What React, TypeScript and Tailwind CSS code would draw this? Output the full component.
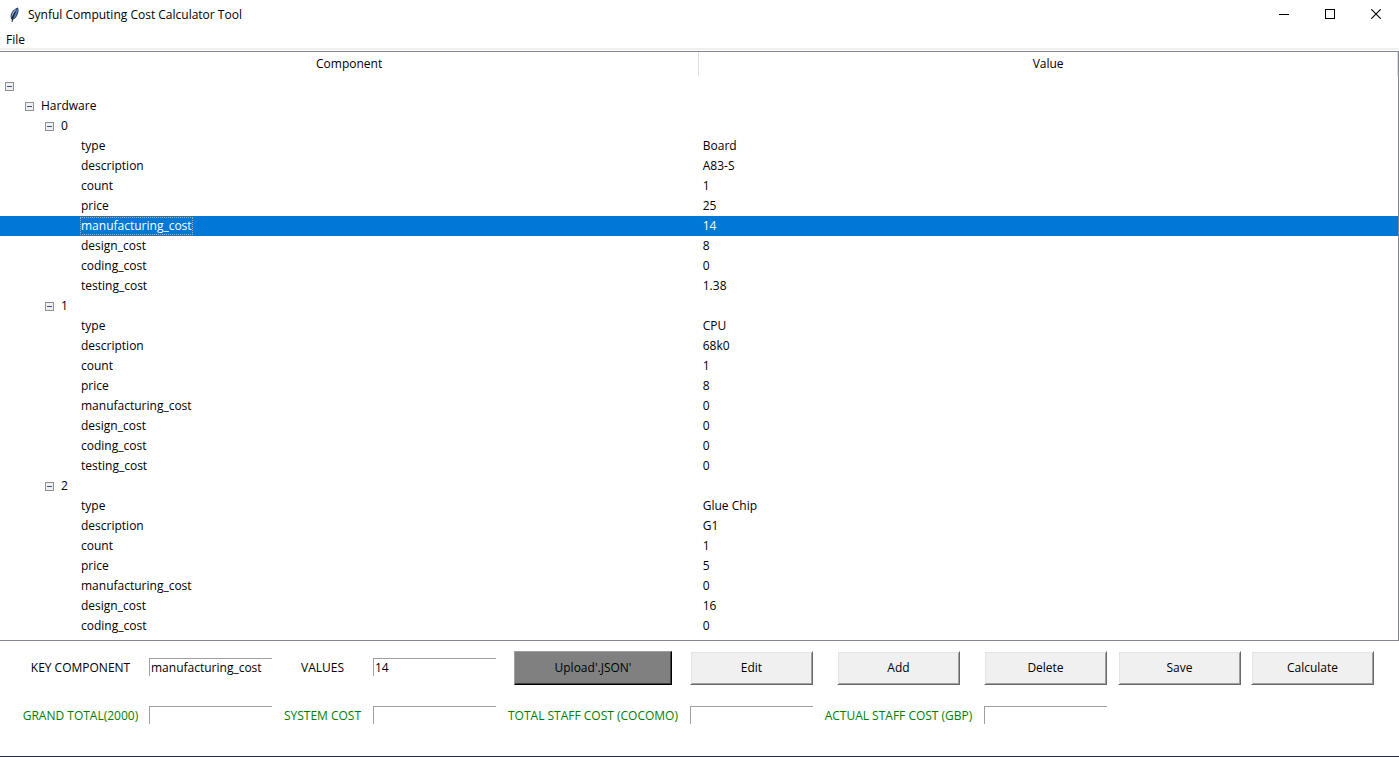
import { useState } from "react";
import type { ReactNode } from "react";

type Row = {
  id: string;
  label: string;
  value?: string;
  level: number;
  parents: string[];
  branch?: boolean;
};

const fields = [
  "type",
  "description",
  "count",
  "price",
  "manufacturing_cost",
  "design_cost",
  "coding_cost",
  "testing_cost",
];

const components = [
  ["Board", "A83-S", "1", "25", "14", "8", "0", "1.38"],
  ["CPU", "68k0", "1", "8", "0", "0", "0", "0"],
  ["Glue Chip", "G1", "1", "5", "0", "16", "0"],
];

const rows: Row[] = [
  { id: "root", label: "", level: 0, parents: [], branch: true },
  { id: "hw", label: "Hardware", level: 1, parents: ["root"], branch: true },
  ...components.flatMap((values, i): Row[] => [
    { id: `hw${i}`, label: String(i), level: 2, parents: ["root", "hw"], branch: true },
    ...values.map((value, j) => ({
      id: `hw${i}-${j}`,
      label: fields[j],
      value,
      level: 3,
      parents: ["root", "hw", `hw${i}`],
    })),
  ]),
];

const indents = ["pl-[5px]", "pl-[25px]", "pl-[45px]", "pl-[81px]"];

function Feather() {
  return (
    <svg width="12" height="16" viewBox="0 0 12 16" aria-hidden="true">
      <path d="M9.8 0.4C11 1.6 10.8 4.6 9.6 7.6C8.6 10.2 7 12 4.8 12.8L3 12C2 9.2 2.8 6.2 4.8 3.8C6.4 2 8.4 0.8 9.8 0.4Z" fill="#2c3a56" />
      <path d="M9.5 1.4C10.2 3.6 9.3 6.8 7.6 9.4C6.6 10.8 5.6 11.6 4.6 11.8C5 9 7.2 5.2 9.5 1.4Z" fill="#5078b4" />
      <path d="M8.8 1.8C5.6 3.4 3.3 6.6 3.6 10.4C4.8 7.6 6.6 4.6 8.8 1.8Z" fill="#9dbbe2" />
      <path d="M7.4 5C5.8 7.6 4.6 10.6 4 15" fill="none" stroke="#141a26" strokeWidth="1" />
    </svg>
  );
}

function Expander({ open, label, onClick }: { open: boolean; label: string; onClick: () => void }) {
  return (
    <button
      type="button"
      aria-label={`Toggle ${label || "root"}`}
      aria-expanded={open}
      onClick={onClick}
      className="mr-[7px] block h-[9px] w-[9px] shrink-0"
    >
      <svg width="9" height="9" viewBox="0 0 9 9" shapeRendering="crispEdges">
        <rect x="0.5" y="0.5" width="8" height="8" fill="#f0f0f0" stroke="#919191" />
        <path d="M2 4.5H7" stroke="#404f86" />
        {!open && <path d="M4.5 2V7" stroke="#404f86" />}
      </svg>
    </button>
  );
}

function WindowButton({ label, children }: { label: string; children: ReactNode }) {
  return (
    <button type="button" aria-label={label} className="flex h-7 w-[46px] items-center justify-center hover:bg-gray-200">
      <svg width="10" height="10" viewBox="0 0 10 10" fill="none" stroke="#000">
        {children}
      </svg>
    </button>
  );
}

const inputClass =
  "mb-0.5 block h-[18px] w-full min-w-0 border-t border-l border-[#a0a0a0] bg-white pl-px text-black outline-none";
const buttonClass =
  "block h-[34px] w-full border border-t-white border-l-white border-r-[#696969] border-b-[#696969] bg-[#f0f0f0] shadow-[inset_1px_1px_#e3e3e3,inset_-1px_-1px_#a0a0a0]";

export default function App() {
  const [closed, setClosed] = useState<string[]>([]);
  const [selected, setSelected] = useState("hw0-4");
  const [key, setKey] = useState("manufacturing_cost");
  const [value, setValue] = useState("14");

  const toggle = (id: string) =>
    setClosed((c) => (c.includes(id) ? c.filter((x) => x !== id) : [...c, id]));

  const select = (row: Row) => {
    setSelected(row.id);
    setKey(row.label);
    setValue(row.value ?? "");
  };

  return (
    <div className="flex min-h-screen flex-col border-b border-[#1f2a44] bg-white font-['Open_Sans','Noto_Sans',sans-serif] text-[12px] leading-5 text-black">
      <header className="flex h-[30px] items-start">
        <div className="flex h-full flex-1 items-center gap-2 pl-2">
          <Feather />
          <h1>Synful Computing Cost Calculator Tool</h1>
        </div>
        <div className="flex">
          <WindowButton label="Minimize">
            <path d="M0 5.5H10" shapeRendering="crispEdges" />
          </WindowButton>
          <WindowButton label="Maximize">
            <path d="M0.5 0.5H9.5V9.5H0.5Z" shapeRendering="crispEdges" />
          </WindowButton>
          <WindowButton label="Close">
            <path d="M0.2 0.2L9.8 9.8M9.8 0.2L0.2 9.8" strokeWidth="1.1" />
          </WindowButton>
        </div>
      </header>

      <nav className="mb-px flex h-5 items-start border-b-2 border-[#f0f0f0] pl-1.5">
        <button type="button">File</button>
      </nav>

      <main className="border-t border-r border-b border-[#828790] pb-1">
        <table className="w-full table-fixed border-collapse">
          <thead>
            <tr className="h-6">
              <th className="border-r border-[#e0e0e0] p-0 font-normal">Component</th>
              <th className="border-r border-[#e0e0e0] p-0 font-normal">Value</th>
            </tr>
          </thead>
          <tbody>
            {rows
              .filter((r) => !r.parents.some((p) => closed.includes(p)))
              .map((r) => {
                const active = r.id === selected;
                return (
                  <tr
                    key={r.id}
                    onClick={() => select(r)}
                    className={active ? "h-5 bg-[#0078d7] text-white" : "h-5"}
                  >
                    <td className="p-0">
                      <div className={`flex h-5 items-center ${indents[r.level]}`}>
                        {r.branch && (
                          <Expander open={!closed.includes(r.id)} label={r.label} onClick={() => toggle(r.id)} />
                        )}
                        <span className={active ? "leading-4 outline-1 outline-dotted outline-[#a8a8a0]" : ""}>
                          {r.label}
                        </span>
                      </div>
                    </td>
                    <td className="p-0 pl-1">{r.value}</td>
                  </tr>
                );
              })}
          </tbody>
        </table>
      </main>

      <form
        onSubmit={(e) => e.preventDefault()}
        className="grid grid-cols-[137fr_123fr_101fr_123fr_194fr_123fr_171fr_123fr_144fr_123fr] items-center gap-y-[21px] pt-2.5 pr-[25px] pl-3 whitespace-nowrap"
      >
        <label htmlFor="key" className="text-center">KEY COMPONENT</label>
        <input id="key" className={inputClass} value={key} onChange={(e) => setKey(e.target.value)} />
        <label htmlFor="value" className="text-center">VALUES</label>
        <input id="value" className={inputClass} value={value} onChange={(e) => setValue(e.target.value)} />
        <div className="px-[18px]">
          <button
            type="button"
            className="block h-[34px] w-full border border-t-[#a0a0a0] border-l-[#a0a0a0] border-r-black border-b-black bg-[#808080] shadow-[inset_-1px_-1px_#404040]"
          >
            Upload'.JSON'
          </button>
        </div>
        <button type="button" className={buttonClass}>Edit</button>
        <div className="px-6">
          <button type="button" className={buttonClass}>Add</button>
        </div>
        <button type="button" className={buttonClass}>Delete</button>
        <div className="pr-2.5 pl-[11px]">
          <button type="button" className={buttonClass}>Save</button>
        </div>
        <button type="button" className={buttonClass}>Calculate</button>

        <label htmlFor="grand" className="text-center text-[#008000]">GRAND TOTAL(2000)</label>
        <input id="grand" className={inputClass} />
        <label htmlFor="system" className="text-center text-[#008000]">SYSTEM COST</label>
        <input id="system" className={inputClass} />
        <label htmlFor="cocomo" className="text-center text-[#008000]">TOTAL STAFF COST (COCOMO)</label>
        <input id="cocomo" className={inputClass} />
        <label htmlFor="staff" className="text-center text-[#008000]">ACTUAL STAFF COST (GBP)</label>
        <input id="staff" className={inputClass} />
      </form>
    </div>
  );
}
